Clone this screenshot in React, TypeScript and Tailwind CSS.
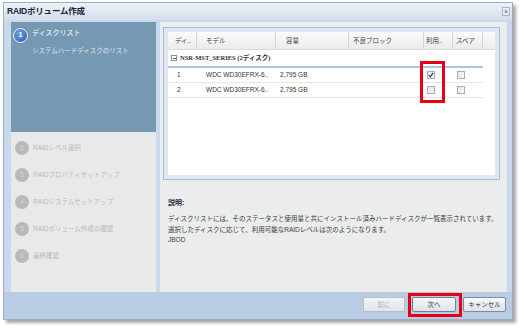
import React from 'react';

const steps = [
  { n: '2', label: 'RAIDレベル選択' },
  { n: '3', label: 'RAIDプロパティセットアップ' },
  { n: '4', label: 'RAIDシステムセットアップ' },
  { n: '5', label: 'RAIDボリューム作成の確認' },
  { n: '6', label: '最終確認' },
];

const disks = [
  { id: '1', model: 'WDC WD30EFRX-6..', size: '2,795 GB', use: true },
  { id: '2', model: 'WDC WD30EFRX-6..', size: '2,795 GB', use: false },
];

const Checkbox: React.FC<{ checked?: boolean }> = ({ checked }) => (
  <div className="w-[8px] h-[8px] border border-[#a9adb3] bg-gradient-to-br from-[#e4e6e9] to-[#f7f7f8] flex items-center justify-center">
    {checked && (
      <svg width="6" height="6" viewBox="0 0 6 6">
        <path d="M0.8 3.2 L2.4 4.8 L5.2 0.9" fill="none" stroke="#2b3f6c" strokeWidth="1.2" />
      </svg>
    )}
  </div>
);

export default function App() {
  return (
    <div className="relative w-[524px] h-[330px] bg-white overflow-hidden font-['Liberation_Sans','Noto_Sans_CJK_JP',sans-serif] text-[6.5px] text-[#333]">
      {/* Window */}
      <div className="ml-[3px] mt-[2px] w-[510px] h-[318px] flex flex-col border border-[#9aaec8] shadow-[3px_3px_3px_rgba(0,0,0,0.35)]">
        {/* Title bar */}
        <div className="h-[17px] flex items-center justify-between pl-[3px] pr-[2px] bg-gradient-to-b from-[#edf2f8] to-[#d3deec]">
          <span className="text-[8.5px] font-bold text-[#1b2436] tracking-[-0.2px]">RAIDボリューム作成</span>
          <div className="w-[8px] h-[9px] border border-[#a7b5c8] bg-[#e9eef5] flex items-center justify-center text-[7px] leading-none text-[#4d5a6c]">×</div>
        </div>

        {/* Body */}
        <div className="flex-1 flex flex-col bg-[#c9d8eb]">
          <div className="h-[270px] mt-[2px] pl-[7px] pr-[5px] flex gap-[4px]">
            {/* Left steps */}
            <div className="w-[145px] flex flex-col bg-[#e8eaea]">
              <div className="h-[110px] bg-[#7699b3] pt-[6px] pl-[2px] flex">
                <div className="w-[15px] h-[15px] rounded-full border-[1.5px] border-white bg-[radial-gradient(circle_at_40%_35%,#6fa0e6,#2558b0)] shadow-[0_0_1px_rgba(0,0,0,0.4)] flex items-center justify-center text-white text-[7px] font-bold">
                  1
                </div>
                <div className="ml-[4px] flex flex-col">
                  <span className="text-[7px] text-white leading-[10px]">ディスクリスト</span>
                  <span className="mt-[8px] text-[6.5px] text-[#dde6ee] leading-[10px]">システムハードディスクのリスト</span>
                </div>
              </div>
              <div className="pt-[2px] flex flex-col">
                {steps.map((s) => (
                  <div key={s.n} className="h-[27px] flex items-center pl-[4px]">
                    <div className="w-[14px] h-[14px] rounded-full bg-[#b9b9b9] flex items-center justify-center text-[6.5px] text-[#d6d6d6]">
                      {s.n}
                    </div>
                    <span className="ml-[4px] text-[#b9b9b9]">{s.label}</span>
                  </div>
                ))}
              </div>
            </div>

            {/* Right panel */}
            <div className="flex-1 bg-[#ebeded] flex flex-col">
              <div className="ml-[3px] mt-[5px] w-[337px] h-[153px] border border-[#a9bed8] bg-[#dfe8f2] p-[4px]">
                <div className="h-full bg-white flex flex-col">
                  {/* Header */}
                  <div className="h-[18px] flex bg-gradient-to-b from-[#fbfbfb] to-[#ececec] border-b border-[#d9d9d9] text-[#444]">
                    <div className="w-[29px] pl-[7px] flex items-center border-r border-[#d4d4d4]">ディ..</div>
                    <div className="w-[79px] pl-[9px] flex items-center border-r border-[#d4d4d4]">モデル</div>
                    <div className="w-[73px] pl-[10px] flex items-center border-r border-[#d4d4d4]">容量</div>
                    <div className="w-[75px] pl-[4px] flex items-center border-r border-[#d4d4d4]">不良ブロック</div>
                    <div className="w-[29px] pl-[2px] flex items-center border-r border-[#d4d4d4]">利用..</div>
                    <div className="w-[30px] pl-[3px] flex items-center border-r border-[#d4d4d4]">スペア</div>
                    <div className="flex-1" />
                  </div>
                  {/* Group row */}
                  <div className="h-[16px] flex items-center pl-[3px] w-[315px]">
                    <div className="w-[6px] h-[6px] border border-[#7d8ea3] flex items-center justify-center">
                      <div className="w-[3px] h-px bg-[#4a5a70]" />
                    </div>
                    <span className="ml-[3px] font-['Liberation_Serif','Noto_Sans_CJK_JP',serif] font-bold text-[6.5px] text-[#2a3142]">
                      NSR-MST_SERIES (2ディスク)
                    </span>
                  </div>
                  <div className="w-[315px] h-[2px] bg-[#a9c5e2]" />
                  {disks.map((d) => (
                    <div key={d.id} className="w-[315px] h-[15px] flex items-center border-b border-[#e6e6e6]">
                      <div className="w-[29px] pl-[9px]">{d.id}</div>
                      <div className="w-[79px] pl-[9px] whitespace-nowrap overflow-hidden">{d.model}</div>
                      <div className="w-[73px] pl-[4px]">{d.size}</div>
                      <div className="w-[75px]" />
                      <div className="w-[29px] pl-[3px]">
                        <Checkbox checked={d.use} />
                      </div>
                      <div className="w-[30px] pl-[4px]">
                        <Checkbox />
                      </div>
                    </div>
                  ))}
                </div>
              </div>

              {/* Description */}
              <div className="pl-[8px] pt-[18px] flex flex-col">
                <span className="text-[7px] font-bold text-[#1e2a40] leading-[10px]">説明:</span>
                <div className="mt-[6px] leading-[10.5px] text-[#3a3a3a]">
                  <div>ディスクリストには、そのステータスと使用量と共にインストール済みハードディスクが一覧表示されています。</div>
                  <div>選択したディスクに応じて、利用可能なRAIDレベルは次のようになります。</div>
                  <div>JBOD</div>
                </div>
              </div>
            </div>
          </div>

          {/* Bottom bar */}
          <div className="flex-1 bg-[#b9cce4] flex justify-end items-start pt-[5px] pr-[6px] gap-[7px]">
            <div className="w-[42px] h-[15px] rounded-[2px] border border-[#b4bfcc] bg-gradient-to-b from-[#f3f4f6] to-[#e1e4e8] flex items-center justify-center text-[#a8adb4]">
              前に
            </div>
            <div className="w-[44px] h-[15px] rounded-[2px] border border-[#6f8296] bg-gradient-to-b from-[#f7f8f9] to-[#dfe3e8] flex items-center justify-center text-[#2f3540]">
              次へ
            </div>
            <div className="w-[43px] h-[15px] rounded-[2px] border border-[#7d8ea2] bg-gradient-to-b from-[#f7f8f9] to-[#dfe3e8] flex items-center justify-center text-[#2f3540]">
              キャンセル
            </div>
          </div>
        </div>
      </div>

      {/* Red highlight marks */}
      <div className="absolute left-[420px] top-[61px] w-[25px] h-[42px] border-[3px] border-[#e60012]" />
      <div className="absolute left-[408px] top-[293px] w-[54px] h-[24px] border-[3px] border-[#e60012]" />
    </div>
  );
}
